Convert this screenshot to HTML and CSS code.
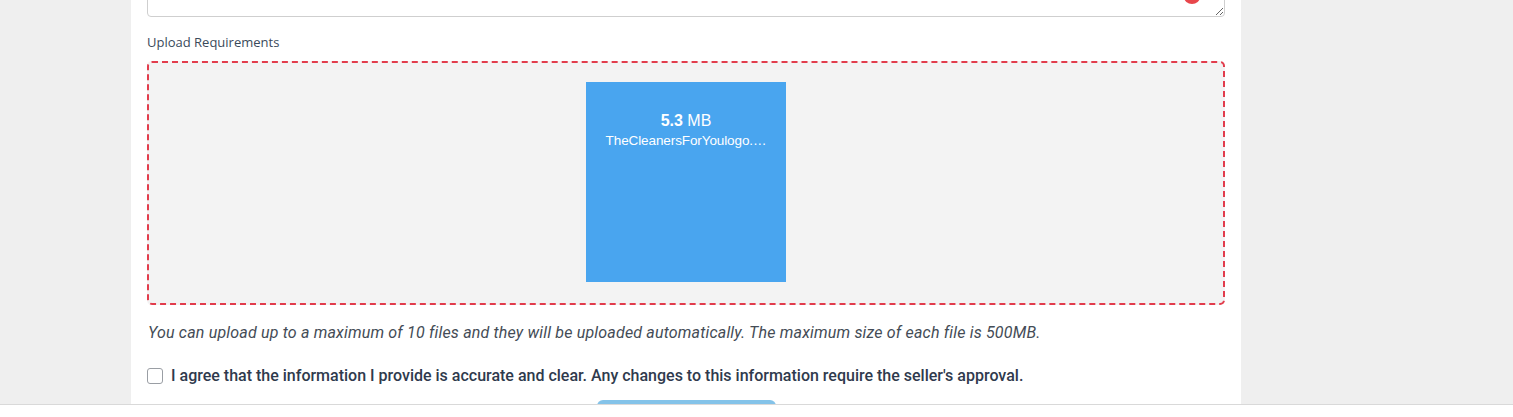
FILE: index.html
```html
<!DOCTYPE html>
<html lang="en">
<head>
    <meta charset="UTF-8">
    <meta name="viewport" content="width=device-width, initial-scale=1.0">
    <title>Order requirements</title>
    <link rel="stylesheet" href="styles.css">
</head>
<body>
    <div class="wrap">
        <section class="panel">
            <div class="note-box">
                <textarea class="note"></textarea>
                <span class="badge"></span>
            </div>

            <label class="field-label">Upload Requirements</label>
            <div class="dropzone">
                <div class="dz-preview">
                    <div class="dz-details">
                        <div class="dz-size"><strong>5.3</strong> MB</div>
                        <div class="dz-filename">TheCleanersForYoulogo.…</div>
                    </div>
                </div>
            </div>

            <p class="hint">You can upload up to a maximum of 10 files and they will be uploaded automatically. The maximum size of each file is 500MB.</p>

            <label class="agree">
                <input type="checkbox" class="agree-box">
                <span>I agree that the information I provide is accurate and clear. Any changes to this information require the seller's approval.</span>
            </label>

            <div class="actions">
                <button class="btn-submit" type="button" aria-label="Submit"></button>
            </div>
        </section>
    </div>
    <footer class="bottom-bar"></footer>
</body>
</html>
```

FILE: styles.css
```css
html, body {
    margin: 0;
    height: 100%;
}

body {
    background: #efefef;
    font-family: Roboto, "Liberation Sans", sans-serif;
    color: #333a45;
    overflow: hidden;
}

.wrap {
    display: flex;
    padding-left: 131px;
}

.panel {
    width: 1078px;
    background: #fff;
    padding: 0 16px 30px 16px;
}

/* textarea du haut */
.note-box {
    position: relative;
    margin-top: -60px;
}
.note {
    display: block;
    box-sizing: border-box;
    width: 100%;
    height: 77px;
    border: 1px solid #cfcfcf;
    border-radius: 4px;
    resize: vertical;
    background: #fff;
}
.badge {
    position: absolute;
    right: 25px;
    top: 50px;
    width: 16px;
    height: 14px;
    border-radius: 50%;
    background: #e8464b;
}

.field-label {
    display: block;
    margin-top: 16px;
    font-family: "Open Sans", sans-serif;
    font-size: 13px;
    color: #3a4a5b;
    line-height: 18px;
}

/* zone d'upload */
.dropzone {
    margin-top: 10px;
    border: 2px dashed #e23c4c;
    border-radius: 5px;
    background: #f3f3f3;
    display: flex;
    justify-content: center;
    padding-top: 19px;
    height: 221px;
}

.dz-preview {
    width: 200px;
    height: 200px;
    background: #49a5ef;
    color: #fff;
    font-family: "Liberation Sans", Arial, sans-serif;
    text-align: center;
}
.dz-details {
    padding-top: 30px;
}
.dz-size {
    font-size: 16px;
    line-height: 18px;
}
.dz-filename {
    margin-top: 3px;
    font-size: 13.5px;
    line-height: 15px;
    letter-spacing: -0.1px;
}

.hint {
    margin: 17px 0 0 1px;
    font-style: italic;
    font-size: 16px;
    line-height: 22px;
    letter-spacing: 0.18px;
    color: #444c56;
}

.agree {
    display: flex;
    align-items: center;
    gap: 8px;
    margin-top: 22px;
    font-size: 16px;
    font-weight: 500;
    color: #2f3a4d;
}
.agree-box {
    appearance: none;
    margin: 0;
    width: 16px;
    height: 16px;
    border: 1px solid #9a9ea4;
    border-radius: 3px;
    background: #fff;
    box-sizing: border-box;
}

.actions {
    display: flex;
    justify-content: center;
    margin-top: 15px;
}
.btn-submit {
    width: 179px;
    height: 40px;
    border: 0;
    border-radius: 6px;
    background: #84c3e9;
}

.bottom-bar {
    position: fixed;
    left: 0;
    right: 0;
    bottom: 0;
    height: 12px;
    background: #fff;
    border-top: 1px solid #d9d9d9;
}
```
